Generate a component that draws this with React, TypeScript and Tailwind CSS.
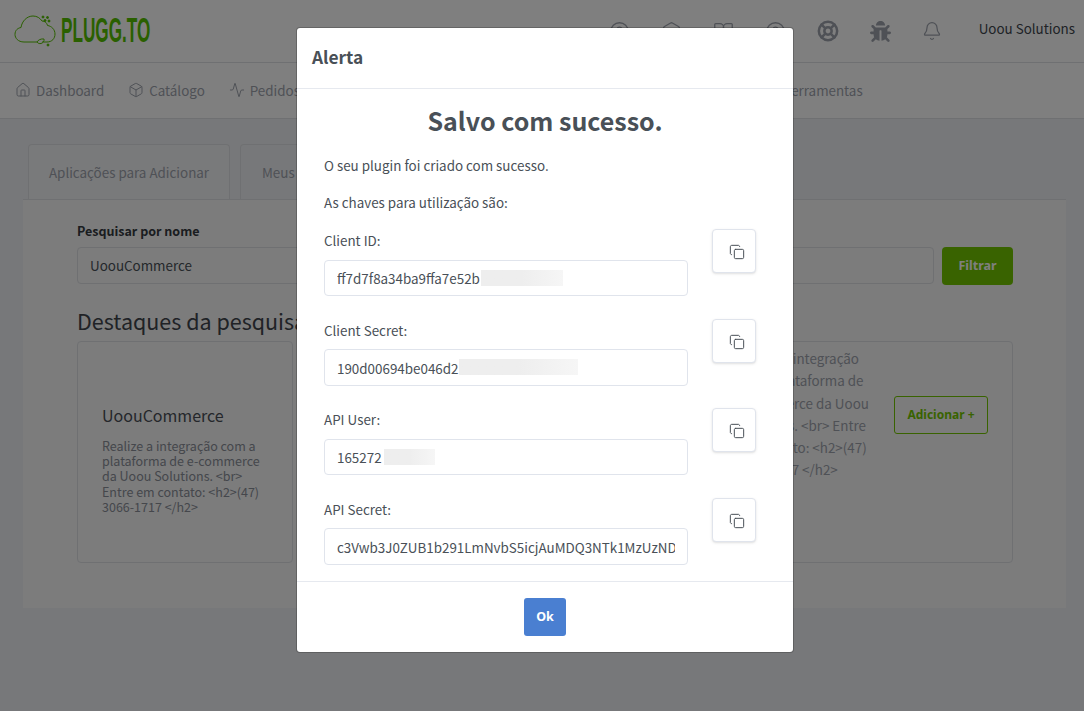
import { Activity, Bell, BookOpen, Box, CircleHelp, Copy, Hexagon, Home, LifeBuoy } from 'lucide-react'
import { FaBug } from 'react-icons/fa'

const navItems = [
  { label: 'Dashboard', icon: Home },
  { label: 'Catálogo', icon: Box },
  { label: 'Pedidos', icon: Activity },
]

const secrets = [
  { label: 'Client ID:', value: 'ff7d7f8a34ba9ffa7e52b', blurLeft: 157, blurWidth: 82 },
  { label: 'Client Secret:', value: '190d00694be046d2', blurLeft: 135, blurWidth: 119 },
  { label: 'API User:', value: '165272', blurLeft: 60, blurWidth: 51 },
  { label: 'API Secret:', value: 'c3Vwb3J0ZUB1b291LmNvbS5icjAuMDQ3NTk1MzUzND', blurLeft: 0, blurWidth: 0 },
]

const cardText = 'Realize a integração com a plataforma de e-commerce da Uoou Solutions. <br> Entre em contato: <h2>(47) 3066-1717 </h2>'

function Logo() {
  return (
    <svg width="42" height="32" viewBox="0 0 42 32" fill="none" stroke="#55c000" strokeWidth="1" className="shrink-0">
      <path d="M10 27C4 27 1 23 1 19.500 1 15 4 13 7 12.500 8 6 13 1 19 1c4 0 7 2 9 5 3 0 5 2 5.500 4.500 4 .5 7.500 4 7.500 8.500 0 4.500-3 8-8 8h-5" />
      <path d="M10 27h13" />
      <path d="M23 27c1-2 4-3.500 7-3 .5 2-1 4-3 4.500-1.500.3-3 0-4-1.500z" />
      <circle cx="29" cy="2" r="1" fill="#55c000" />
      <circle cx="33.500" cy="2.500" r="1" fill="#55c000" />
      <circle cx="31" cy="5.500" r="1" fill="#55c000" />
      <circle cx="35" cy="6" r="1" fill="#55c000" />
      <circle cx="34" cy="30" r="1" fill="#55c000" />
    </svg>
  )
}

function Card() {
  return (
    <div className="flex w-[216px] items-center rounded border border-[#dfe1e5] pt-[14px]">
      <div className="ml-[24px] w-[168px]">
        <div className="mb-[12px] text-[16px] leading-[22px] text-[#4a4f57]">UoouCommerce</div>
        <div className="text-[12.500px] leading-[15.200px] text-[#8a8f98]">{cardText}</div>
      </div>
    </div>
  )
}

export default function App() {
  return (
    <div className="relative h-[711px] w-[1084px] overflow-hidden bg-[#eff1f4] text-[#495057] font-['Noto_Sans_CJK_SC','Liberation_Sans',sans-serif]">
      {/* Top bar */}
      <div className="flex h-[63px] items-center border-b border-[#dee0e4] bg-white pl-[14px] pr-[9px]">
        <Logo />
        <div className="mb-[3px] ml-[5px] w-[88px] origin-left scale-x-[0.49] whitespace-nowrap font-['Liberation_Sans',sans-serif] text-[35px] font-bold leading-none text-[#55c000]">PLUGG.TO</div>
        <div className="ml-auto flex items-center gap-[31px] text-[#9ea3ad]">
          <CircleHelp size={21} strokeWidth={1.5} />
          <Hexagon size={21} strokeWidth={1.5} />
          <BookOpen size={21} strokeWidth={1.5} />
          <CircleHelp size={21} strokeWidth={1.5} />
          <LifeBuoy size={22} strokeWidth={2.75} />
          <FaBug size={21} />
          <Bell size={20} strokeWidth={1.5} />
        </div>
        <div className="mb-[6px] ml-[37px] text-[13.400px] text-[#40454d]">Uoou Solutions</div>
      </div>

      {/* Nav */}
      <div className="flex h-[56px] items-center border-b border-[#dee0e4] bg-white pl-[15px] text-[13.400px] text-[#9ea3ad]">
        {navItems.map((n) => (
          <div key={n.label} className="mr-[24px] flex items-center gap-[5px]">
            <n.icon size={16} strokeWidth={1.5} />
            {n.label}
          </div>
        ))}
        <div className="ml-[460px]">Ferramentas</div>
      </div>

      {/* Tabs */}
      <div className="flex gap-[10px] pl-[28px] pt-[25px]">
        <div className="flex h-[55px] w-[202px] items-center justify-center rounded-t border border-b-0 border-[#dee0e4] bg-[#f3f4f6] text-[13.400px] text-[#9ea3ad]">Aplicações para Adicionar</div>
        <div className="flex h-[55px] w-[180px] items-center rounded-t border border-b-0 border-[#dee0e4] pl-[21px] text-[13.400px] text-[#9ea3ad]">Meus Plugins</div>
      </div>

      {/* Panel */}
      <div className="ml-[23px] h-[409px] w-[1043px] border-t border-[#dee0e4] bg-[#f8f8f8] pl-[54px] pr-[53px] pt-[22px]">
        <div className="text-[12.500px] font-bold leading-[18px] text-[#343a40]">Pesquisar por nome</div>
        <div className="mt-[7px] flex gap-[8px]">
          <div className="flex h-[37px] flex-1 items-center rounded border border-[#dee0e4] bg-[#f8f8f8] px-[12px] text-[13.400px]">UoouCommerce</div>
          <div className="flex h-[38px] w-[71px] items-center justify-center rounded bg-[#73c700] font-['Noto_Sans',sans-serif] text-[12.500px] font-bold text-white">Filtrar</div>
        </div>
        <div className="mt-[19px] text-[21.500px] leading-[34px] text-[#40454d]">Destaques da pesquisa (1)</div>
        <div className="mt-[3px] flex h-[222px] justify-between">
          <Card />
          <div className="flex w-[300px] items-start rounded border border-[#dfe1e5] pl-[21px]">
            <div className="mt-[5px] w-[140px] text-[13.400px] leading-[22.300px] text-[#9ea3ad]">{cardText}</div>
            <div className="ml-auto mr-[24px] mt-[54px] flex h-[38px] w-[94px] items-center justify-center rounded-[3px] border border-[#73c700] font-['Noto_Sans',sans-serif] text-[12px] font-bold text-[#73c700]">Adicionar +</div>
          </div>
        </div>
      </div>

      {/* Overlay + modal */}
      <div className="absolute inset-0 bg-black/50">
        <div className="absolute left-[296px] top-[27px] flex h-[626px] w-[498px] flex-col rounded border border-black/20 bg-white bg-clip-padding">
          <div className="flex h-[61px] shrink-0 items-center border-b border-[#e6e9ef] pb-[2px] pl-[15px] text-[17.300px] font-bold text-[#495057]">Alerta</div>
          <div className="min-h-0 flex-1 overflow-hidden px-[27px]">
            <h1 className="mt-[13px] text-center text-[25px] font-bold leading-[36px]">Salvo com sucesso.</h1>
            <p className="mt-[17px] text-[13.400px] leading-[20px]">O seu plugin foi criado com sucesso.</p>
            <p className="mt-[17px] text-[13.400px] leading-[20px]">As chaves para utilização são:</p>
            <div className="mt-[17.250px]">
              {secrets.map((s) => (
                <div key={s.label} className="mb-[22.500px] flex">
                  <div className="w-[364px]">
                    <div className="mb-[6.500px] h-[24px] text-[13.400px] leading-[22px]">{s.label}</div>
                    <div className="relative">
                      <input readOnly value={s.value} className="h-[36.500px] w-full rounded border border-[#e0e4ec] bg-white px-[12px] text-[13.400px] text-[#495057]" />
                      {s.blurWidth > 0 && (
                        <div className="absolute top-[10px] h-[16px] bg-gradient-to-r from-[#eeeeee] via-[#eeeeee] to-[#f6f6f6]" style={{ left: s.blurLeft, width: s.blurWidth }} />
                      )}
                    </div>
                  </div>
                  <div className="ml-[24px] flex h-[44px] w-[44px] items-center justify-center rounded border border-[#e0e4ec] bg-white pl-[6px] pt-[2px] shadow-sm">
                    <Copy size={16} strokeWidth={1.5} />
                  </div>
                </div>
              ))}
            </div>
          </div>
          <div className="flex h-[71px] shrink-0 items-center justify-center border-t border-[#e6e9ef]">
            <div className="flex h-[38px] w-[42px] items-center justify-center rounded-[3px] bg-[#4a7fd1] font-['Noto_Sans',sans-serif] text-[12.500px] font-bold text-white">Ok</div>
          </div>
        </div>
      </div>
    </div>
  )
}
